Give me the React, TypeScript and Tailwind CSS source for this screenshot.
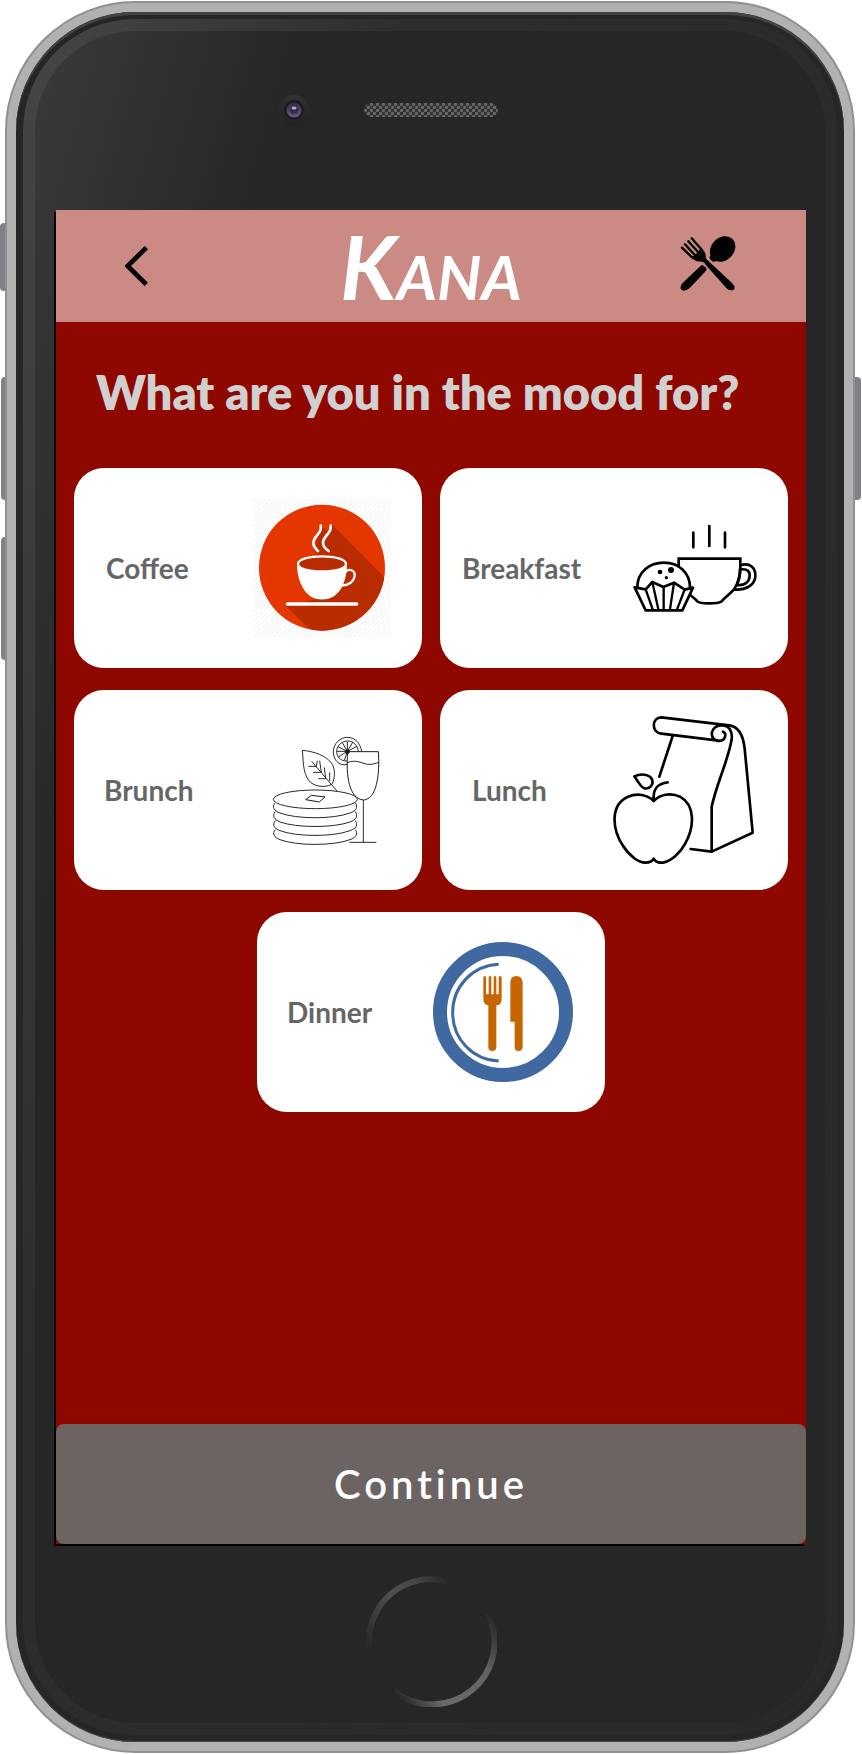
import type { ReactNode } from "react";

function CoffeeIcon() {
  return (
    <g transform="translate(-7 2) scale(0.33333)">
      <defs>
        <pattern id="hatch" width="15" height="15" patternUnits="userSpaceOnUse">
          <path d="M-4 4L4 -4M0 15L15 0M11 19L19 11" stroke="#f0f0f0" strokeWidth="3" />
        </pattern>
        <clipPath id="disc">
          <circle cx="246" cy="233" r="189" />
        </clipPath>
      </defs>
      <rect x="40" y="28" width="413" height="412" fill="url(#hatch)" />
      <circle cx="246" cy="233" r="189" fill="#e63600" />
      <path
        d="M275 103L480 308V480H270L138 347L240 325L175 240L246 180Z"
        fill="#b82c00"
        clipPath="url(#disc)"
      />
      <path d="M238 108L262 120L248 190H225Z" fill="#b82c00" />
      <ellipse cx="246" cy="221" rx="70" ry="22" fill="#b82c00" />
      <path
        d="M174 222C174 207 208 199 246 199C284 199 318 207 318 222C318 237 284 244 246 244C208 244 174 237 174 222Z"
        fill="none"
        stroke="#fff"
        strokeWidth="7"
      />
      <path
        d="M171 222C176 239 210 246 246 246C282 246 316 239 321 222C321 270 304 303 283 318C262 332 230 332 210 318C186 300 171 264 171 222Z"
        fill="#fff"
      />
      <path
        d="M315 247C325 234 346 240 344 257C342 276 324 286 304 287"
        fill="none"
        stroke="#fff"
        strokeWidth="7"
      />
      <path
        d="M242 107C248 132 220 136 220 159C220 171 228 177 234 183M272 107C276 132 249 136 249 159C249 171 257 177 266 183"
        fill="none"
        stroke="#fff"
        strokeWidth="8"
        strokeLinecap="round"
      />
      <path d="M142 342H350" stroke="#fff" strokeWidth="10" strokeLinecap="round" />
    </g>
  );
}

function BreakfastIcon() {
  return (
    <g
      transform="translate(-3 12) scale(0.33333)"
      fill="none"
      stroke="#000"
      strokeWidth="8"
      strokeLinejoin="round"
    >
      <path d="M250 98V142M298 78V138M345 98V142" strokeLinecap="round" />
      <path
        d="M206 202V176H391V198C391 232 386 248 372 268C358 284 344 292 334 305C322 312 270 312 262 304C256 296 248 292 240 284"
        strokeLinejoin="miter"
      />
      <path d="M391 196C420 186 438 204 436 230C434 256 406 272 370 268" />
      <path d="M390 208C410 206 420 212 419 228C418 246 404 258 380 255C386 240 390 228 390 208Z" />
      <path d="M82 262C82 216 118 188 162 188C206 188 240 218 240 262" />
      <path d="M74 262L107 331H217L249 263L224 269L192 248L160 261L127 246L107 268Z" />
      <path d="M107 268L129 331M127 246L145 328M161 261V331M192 248L180 328M224 269L200 331" strokeWidth="7" />
      <g fill="#000" stroke="none">
        <circle cx="150" cy="216" r="7" />
        <circle cx="183" cy="210" r="9" />
        <circle cx="169" cy="233" r="5" />
      </g>
    </g>
  );
}

function BrunchIcon() {
  return (
    <g transform="translate(13 10) scale(0.33333)" fill="none" stroke="#1a1a1a" strokeWidth="2.8">
      <ellipse cx="166" cy="238" rx="126" ry="28" />
      <path d="M44 250C36 262 42 272 60 279C110 298 220 298 270 279C290 272 294 262 286 248" />
      <path d="M46 275C36 288 42 298 60 306C110 324 220 324 270 306C290 298 294 288 286 275" />
      <path d="M46 302C36 315 42 325 60 332C110 351 220 351 270 332C290 325 294 315 286 302" />
      <path d="M46 329C36 341 42 352 60 359C110 378 220 378 270 359C290 352 294 341 286 329" />
      <path d="M137 239L154 226L195 231L178 246Z" strokeLinejoin="round" strokeWidth="3" />
      <path d="M127 91C160 94 200 106 217 133C227 152 224 178 216 193C190 205 160 199 146 181C128 156 130 120 127 91Z" />
      <path d="M155 124L231 213M145 139H169L172 122M160 157H184L179 122M175 176H197L193 142M209 183V157" />
      <path d="M262 133C234 140 219 116 220 93C222 70 240 52 263 52C285 52 301 70 305 94" />
      <path d="M262 123C240 124 229 108 230 92C232 75 246 63 263 63C280 63 293 76 295 94" />
      <path d="M262 94V65M262 94L247 68M262 94L234 80M262 94H231M262 94L235 111M262 94L253 121M262 94L278 67M262 94L291 79" />
      <circle cx="262" cy="95" r="6" fill="#1a1a1a" />
      <path d="M263 95H355C360 165 350 238 310 240C268 236 257 170 263 95Z" strokeWidth="3" />
      <path d="M262 128C286 118 302 128 322 133C338 134 348 130 356 127M310 240V367M268 367H349" />
    </g>
  );
}

function LunchIcon() {
  return (
    <g
      transform="translate(-13 -10) scale(0.33333)"
      fill="none"
      stroke="#000"
      strokeWidth="8"
      strokeLinecap="round"
      strokeLinejoin="round"
    >
      <path d="M356 122L184 101C154 98 154 53 184 52L388 76C416 80 430 108 434 146L458 398L335 455V320C350 250 385 180 395 118C398 92 386 76 366 76C330 74 324 122 358 123C378 121 380 99 369 95" />
      <path d="M218 108L178 230M335 455L272 447" />
      <path d="M161 302C158 262 176 250 203 247" />
      <path d="M161 303C142 284 112 278 84 290C30 314 36 386 68 436C88 468 116 488 136 488C150 488 158 482 161 476C165 484 176 490 192 487C214 482 240 460 256 430C282 384 288 316 240 290C210 276 180 284 161 303Z" />
      <path d="M103 229C122 220 148 222 156 238C162 254 150 268 134 265C120 262 114 242 103 229Z" />
    </g>
  );
}

function DinnerIcon() {
  return (
    <g transform="translate(-11 -7) scale(0.33333)">
      <circle cx="252" cy="261" r="189" fill="none" stroke="#4169a1" strokeWidth="42" />
      <path
        d="M239 118C160 122 101 184 101 263C101 342 160 404 239 408"
        fill="none"
        stroke="#4169a1"
        strokeWidth="9"
      />
      <g fill="#c76600">
        <path d="M193 156Q197 150 201 156V208H209V156Q213 150 217 156V208H224V156Q228 150 232 156V208H239V156Q244 150 248 156V222Q248 241 232 241V367Q232 378 220 378Q208 378 208 367V241Q193 239 193 222Z" />
        <path d="M274 172Q275 153 292 153Q310 154 311 172V366Q310 378 298 378Q287 378 287 366V290H274Z" />
      </g>
    </g>
  );
}

type Meal = { name: string; icon: ReactNode; className: string };

const meals: Meal[] = [
  { name: "Coffee", icon: <CoffeeIcon />, className: "pl-8" },
  { name: "Breakfast", icon: <BreakfastIcon />, className: "pl-[22px]" },
  { name: "Brunch", icon: <BrunchIcon />, className: "pl-[30px]" },
  { name: "Lunch", icon: <LunchIcon />, className: "pl-8" },
  { name: "Dinner", icon: <DinnerIcon />, className: "col-start-2 pl-[30px]" },
];

function MealCard({ name, icon, className }: Meal) {
  return (
    <button
      type="button"
      className={`col-span-2 flex items-center justify-between rounded-[30px] bg-white py-5 pr-[25px] text-[28px] leading-8 font-bold text-[#666] ${className}`}
    >
      <span>{name}</span>
      <svg aria-hidden="true" viewBox="0 0 150 160" className="h-40 w-[150px] min-w-0">
        {icon}
      </svg>
    </button>
  );
}

function Header() {
  return (
    <header className="grid h-28 grid-cols-[1fr_auto_1fr] items-center bg-[#cb8a84] px-[69px]">
      <button type="button" aria-label="Back" className="justify-self-start">
        <svg viewBox="374 738 69 120" className="h-10 w-[23px]">
          <path d="M438 743L382 798L438 853" fill="none" stroke="#000" strokeWidth="14" />
        </svg>
      </button>
      <h1 className="text-[88px] leading-[100px] font-bold text-white italic [font-variant-caps:small-caps]">
        Kana
      </h1>
      <button type="button" aria-label="Restaurants" className="justify-self-end">
        <svg viewBox="51 48 174 180" className="h-[60px] w-[58px]">
          <path
            d="M89 55L120 90M79 64L110 98M69 73L101 108M60 83L92 114"
            stroke="#000"
            strokeWidth="7"
            strokeLinecap="round"
          />
          <path d="M117 85Q131 96 131 106L132 116L210 189Q222 202 215 209Q207 214 195 206L132 136Q128 126 120 125L105 124Q96 121 88 111L100 104Z" />
          <ellipse cx="182" cy="87" rx="42" ry="34" transform="rotate(-45 182 87)" />
          <path d="M147 86C149 98 147 106 142 112Q148 127 158 125C164 121 172 120 186 121Z" />
          <path d="M118 136Q124 133 134 146Q135 150 128 157L83 204Q66 218 57 208Q53 200 61 190Z" />
        </svg>
      </button>
    </header>
  );
}

function Screen() {
  return (
    <main className="flex flex-1 flex-col bg-[#8e0800] shadow-[-2px_2px_0_#000]">
      <Header />
      <h2 className="pt-10 pr-4 pb-[46px] pl-10 text-[47px] leading-[60px] font-extrabold text-[#d0d0d0]">
        What are you in the mood for?
      </h2>
      <div className="grid grid-cols-4 gap-x-[18px] gap-y-[22px] px-[18px] pb-10">
        {meals.map((meal) => (
          <MealCard key={meal.name} {...meal} />
        ))}
      </div>
      <button
        type="button"
        className="mt-auto h-[120px] rounded-lg bg-[#6b6463] text-[40px] leading-[48px] font-semibold tracking-widest text-white"
      >
        Continue
      </button>
    </main>
  );
}

function TopBezel() {
  return (
    <div className="grid grid-cols-[1fr_auto_1fr] items-center pt-16 pb-[85px]">
      <svg viewBox="0 0 30 30" className="mr-[55px] size-[30px] justify-self-end">
        <defs>
          <linearGradient id="rim" x1="0" y1="0" x2="0" y2="1">
            <stop offset="0" stopColor="#323232" />
            <stop offset="1" stopColor="#222" />
          </linearGradient>
          <linearGradient id="lens" x1="0" y1="0" x2="0" y2="1">
            <stop offset="0" stopColor="#35264a" />
            <stop offset="1" stopColor="#6a5a85" />
          </linearGradient>
        </defs>
        <circle cx="15" cy="15" r="15" fill="url(#rim)" />
        <circle cx="15" cy="15" r="10" fill="#1b1a1f" />
        <circle cx="15" cy="15" r="7.5" fill="url(#lens)" />
        <circle cx="15" cy="15" r="4" fill="#352d45" />
        <ellipse cx="15" cy="13" rx="2.5" ry="1.5" fill="#b5aebd" />
      </svg>
      <svg viewBox="0 0 134 14" className="h-[14px] w-[134px]">
        <defs>
          <pattern id="mesh" width="6" height="6" patternUnits="userSpaceOnUse">
            <rect width="6" height="6" fill="#303030" />
            <circle cx="1.5" cy="1.5" r="1.7" fill="#666" />
            <circle cx="4.5" cy="4.5" r="1.7" fill="#666" />
          </pattern>
        </defs>
        <rect width="134" height="14" rx="7" fill="url(#mesh)" />
      </svg>
    </div>
  );
}

function HomeButton() {
  return (
    <button type="button" aria-label="Home" className="mt-8 mb-4 self-center rounded-full">
      <svg viewBox="0 0 131 131" className="size-[131px]">
        <defs>
          <linearGradient id="arcTop" gradientUnits="userSpaceOnUse" x1="2" y1="74" x2="82" y2="4">
            <stop offset="0" stopColor="#262626" />
            <stop offset="0.5" stopColor="#4e4e4e" />
            <stop offset="0.75" stopColor="#464646" />
            <stop offset="1" stopColor="#262626" />
          </linearGradient>
          <linearGradient id="arcBottom" gradientUnits="userSpaceOnUse" x1="27" y1="116" x2="123" y2="36">
            <stop offset="0" stopColor="#262626" />
            <stop offset="0.25" stopColor="#6a6a6a" />
            <stop offset="0.7" stopColor="#626262" />
            <stop offset="1" stopColor="#262626" />
          </linearGradient>
        </defs>
        <g fill="none" strokeWidth="6">
          <path d="M3.5 74A62.5 62.5 0 0 1 81 5" stroke="url(#arcTop)" />
          <path d="M28 115.5A62.5 62.5 0 0 0 122 38" stroke="url(#arcBottom)" />
        </g>
      </svg>
    </button>
  );
}

export default function App() {
  return (
    <div className="flex min-h-screen bg-white py-px font-['Lato',sans-serif]">
      <div className="flex w-[5px] shrink-0 flex-col pt-[222px]">
        <div className="h-[68px] rounded-l-[4px] bg-[#808188]" />
        <div className="mt-[86px] ml-px h-[123px] rounded-l-[4px] bg-[#808188]" />
        <div className="mt-[37px] ml-px h-[123px] rounded-l-[4px] bg-[#808188]" />
      </div>
      <div className="flex min-w-0 flex-1 rounded-[130px] border-2 border-[#919191] bg-[#b1b1b1] p-[9px]">
        <div className="flex min-w-0 flex-1 rounded-[119px] bg-[#262626] p-[7px] shadow-[inset_0_3px_0_#424242,inset_0_-1px_0_#484848]">
          <div className="flex min-w-0 flex-1 rounded-[112px] bg-[linear-gradient(106deg,#464646,#2d2d2d_30%,#292929)] p-3">
            <div className="flex min-w-0 flex-1 flex-col rounded-[100px] bg-[linear-gradient(106deg,#3a3a3a,#262626_22%)] pr-[19px] pl-[21px]">
              <TopBezel />
              <Screen />
              <HomeButton />
            </div>
          </div>
        </div>
      </div>
      <div className="w-[7px] shrink-0 pt-[376px]">
        <div className="mr-px h-[123px] rounded-r-[4px] bg-[#808188]" />
      </div>
    </div>
  );
}
